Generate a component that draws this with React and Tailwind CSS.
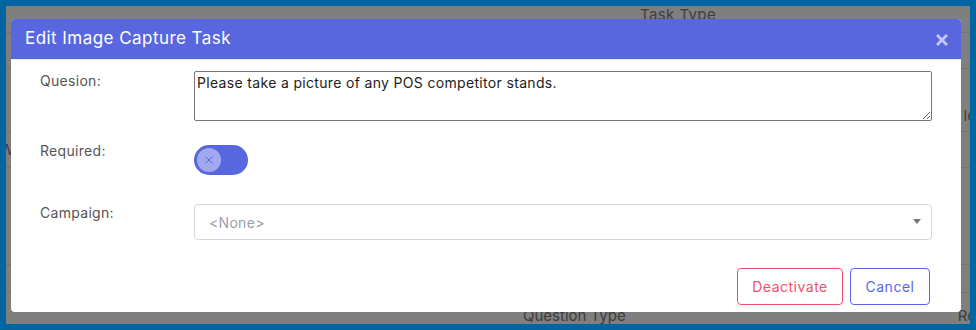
import React from "react";

export default function App() {
  return (
    <div className="w-[976px] h-[330px] bg-[#0066a1] p-[6px] font-['Inter',sans-serif]">
      <div className="relative w-full h-full bg-[#7f7f7f] overflow-hidden">
        {/* background page (dimmed) */}
        <div className="flex flex-col text-[#333] text-[14px]">
          <div className="h-[27px] border-b border-[#727272] flex items-start">
            <span className="ml-[634px] mt-[-2px] text-[#3d3d3d] text-[15px] tracking-[0.4px]">Task Type</span>
          </div>
          <div className="h-[36px] border-b border-[#727272]" />
          <div className="h-[63px] border-b border-[#727272] flex items-end justify-end pb-[1px]">
            <span className="text-[#3d3d3d] text-[15px] mr-[-6px] mb-[3px]">le</span>
          </div>
          <div className="h-[36px] border-b border-[#727272] flex items-center">
            <span className="text-[#3d3d3d] ml-[-6px]">W</span>
          </div>
          <div className="h-[97px] border-b border-[#727272]" />
          <div className="h-[28px] border-b border-[#727272]" />
          <div className="flex items-start h-[30px]">
            <span className="ml-[517px] text-[#3d3d3d] text-[15px] mt-[12px]">Question Type</span>
            <span className="ml-auto mr-[-6px] text-[#3d3d3d] text-[15px] mt-[12px]">Re</span>
          </div>
        </div>

        {/* modal */}
        <div className="absolute left-[5px] top-[13px] w-[950px] h-[293px] bg-white rounded-[4px] overflow-hidden flex flex-col">
          <div className="h-[41px] bg-[#5867dd] border-b border-[#e9ecef] flex items-center justify-between pl-[14px] pr-[12px] shrink-0">
            <span className="text-white text-[17px] tracking-[0.45px]">Edit Image Capture Task</span>
            <svg width="14" height="12" viewBox="0 0 14 12" className="mt-[2px]">
              <path d="M2 1 L12 11 M12 1 L2 11" stroke="#c3c8f5" strokeWidth="2.8" strokeLinecap="butt" />
            </svg>
          </div>
          <div className="flex flex-col pl-[29px] pr-[29px] pt-[11px] tracking-[0.3px]">
            <div className="flex items-start">
              <div className="w-[154px] text-[14px] leading-[20px] text-[#555]">Quesion:</div>
              <textarea
                className="w-[738px] h-[50px] border border-[#767676] rounded-[2px] px-[2px] py-[1px] text-[14px] leading-[20px] tracking-[0.33px] text-[#222] outline-none"
                defaultValue="Please take a picture of any POS competitor stands."
              />
            </div>
            <div className="flex items-start mt-[20px]">
              <div className="w-[154px] text-[14px] leading-[20px] text-[#555]">Required:</div>
              <div className="mt-[4px] w-[54px] h-[30px] rounded-full bg-[#5867dd] flex items-center pl-[3px]">
                <div className="w-[24px] h-[24px] rounded-full bg-[#a2a9ef] flex items-center justify-center">
                  <svg width="10" height="10" viewBox="0 0 10 10">
                    <path d="M1.5 1.5 L8.5 8.5 M8.5 1.5 L1.5 8.5" stroke="#5867dd" strokeWidth="1" />
                  </svg>
                </div>
              </div>
            </div>
            <div className="flex items-start mt-[28px]">
              <div className="w-[154px] text-[14px] leading-[20px] text-[#555]">Campaign:</div>
              <div className="mt-[1px] w-[738px] h-[36px] border border-[#d2d5db] rounded-[4px] flex items-center justify-between pl-[14px] pr-[10px]">
                <span className="text-[14px] text-[#9ca0a6]">&lt;None&gt;</span>
                <svg width="8" height="6" viewBox="0 0 8 6">
                  <path d="M0 0 L8 0 L4 5 Z" fill="#777" />
                </svg>
              </div>
            </div>
            <div className="flex justify-end gap-[7px] mt-[28px] pr-[2px]">
              <button className="w-[106px] h-[37px] border border-[#f0506e] rounded-[4px] text-[#f0506e] text-[14px] tracking-[0.5px]">Deactivate</button>
              <button className="w-[80px] h-[37px] border border-[#5867dd] rounded-[4px] text-[#5867dd] text-[14px] tracking-[0.5px]">Cancel</button>
            </div>
          </div>
        </div>
      </div>
    </div>
  );
}
